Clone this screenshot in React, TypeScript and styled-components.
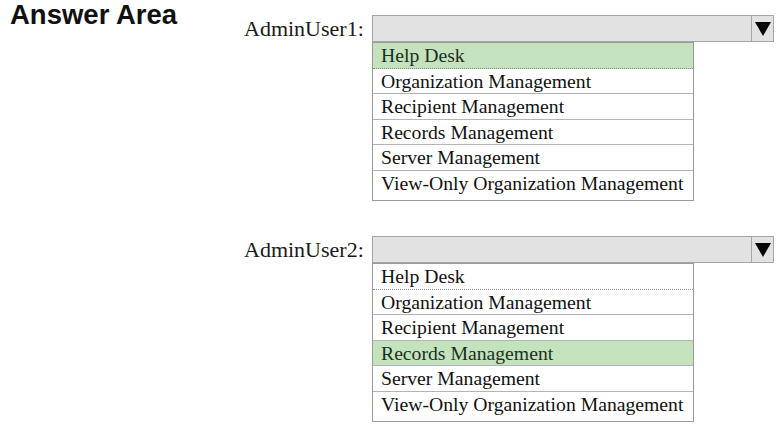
import React from 'react'
import styled, { createGlobalStyle } from 'styled-components'

const OPTIONS = [
    'Help Desk',
    'Organization Management',
    'Recipient Management',
    'Records Management',
    'Server Management',
    'View-Only Organization Management',
]

const QUESTIONS = [
    { user: 'AdminUser1:', selected: 0 },
    { user: 'AdminUser2:', selected: 3 },
]

const GlobalStyle = createGlobalStyle`
    body {
        margin: 0;
        background: #ffffff;
        font-family: "Liberation Serif", "Times New Roman", serif;
    }
`

const DropArrow: React.FC = () => (
    <svg width="16" height="14" viewBox="0 0 16 14">
        <polygon points="0,0 16,0 8,14" fill="#050505" />
    </svg>
)

const App: React.FC = () => {
    return (
        <>
            <GlobalStyle />
            <PageStyled>
                <TitleStyled>Answer Area</TitleStyled>
                <QuestionsStyled>
                    {QUESTIONS.map((q) => (
                        <QuestionStyled key={q.user}>
                            <LabelStyled>{q.user}</LabelStyled>
                            <SelectStyled>
                                <SelectValue />
                                <ArrowCell>
                                    <DropArrow />
                                </ArrowCell>
                            </SelectStyled>
                            <ListStyled>
                                {OPTIONS.map((opt, i) => (
                                    <OptionRow key={opt} $selected={i === q.selected} $first={i === 0}>
                                        {opt}
                                    </OptionRow>
                                ))}
                            </ListStyled>
                        </QuestionStyled>
                    ))}
                </QuestionsStyled>
            </PageStyled>
        </>
    )
}

export default App

const PageStyled = styled.div`
    display: flex;
    align-items: flex-start;
    width: 783px;
    height: 432px;
    padding-left: 10px;
    box-sizing: border-box;
    overflow: hidden;
`

const TitleStyled = styled.h1`
    margin: 0;
    width: 234px;
    flex: 0 0 234px;
    font-family: "Liberation Sans", Arial, sans-serif;
    font-weight: 700;
    font-size: 27.5px;
    line-height: 29px;
    color: #111111;
`

const QuestionsStyled = styled.div`
    display: flex;
    flex-direction: column;
    gap: 35px;
    padding-top: 15px;
`

const QuestionStyled = styled.div`
    display: grid;
    grid-template-columns: 128px 402px;
    grid-template-rows: auto auto;
`

const LabelStyled = styled.div`
    text-align: right;
    padding-right: 16px;
    font-size: 22px;
    line-height: 27px;
    color: #1a1a1a;
`

const SelectStyled = styled.div`
    display: flex;
    height: 27px;
    box-sizing: border-box;
    border: 1px solid #a6a6a6;
    background: #e2e2e2;
`

const SelectValue = styled.div`
    flex: 1;
`

const ArrowCell = styled.div`
    width: 21px;
    display: flex;
    align-items: center;
    justify-content: center;
    border-left: 1px solid #a6a6a6;
`

const ListStyled = styled.div`
    grid-column: 2;
    width: 322px;
    box-sizing: border-box;
    border: 1px solid #9a9a9a;
    padding-bottom: 5px;
    background: #ffffff;
`

const OptionRow = styled.div<{ $selected: boolean; $first: boolean }>`
    height: 24.5px;
    line-height: 24.5px;
    padding-left: 8px;
    font-size: 19.7px;
    white-space: nowrap;
    color: ${(p) => (p.$selected ? '#1c301c' : '#111111')};
    background: ${(p) => (p.$selected ? '#c4e2be' : 'transparent')};
    border-bottom: 1px ${(p) => (p.$first ? 'dotted #8a8a8a' : 'solid #b4b4b4')};

    &:last-child {
        border-bottom: none;
    }
`
